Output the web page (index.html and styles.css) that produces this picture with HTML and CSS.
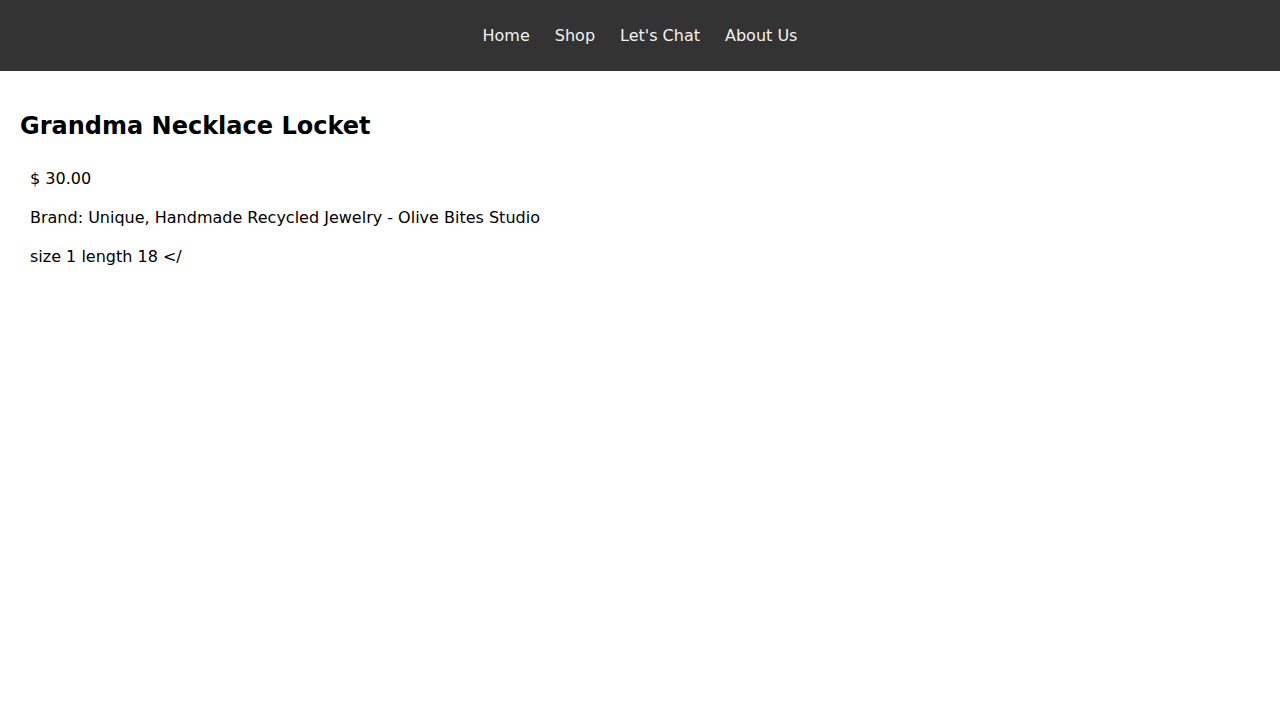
FILE: index.html
```html
<!DOCTYPE html>
<html lang="en">
<head>
<meta charset="utf-8">
<title>Grandma Necklace Locket</title>
<link rel="stylesheet" href="styles.css">
</head>
<body>
<nav class="topnav">
  <a class="nav-link" href="#">Home</a>
  <a class="nav-link" href="#">Shop</a>
  <a class="nav-link" href="#">Let's Chat</a>
  <a class="nav-link" href="#">About Us</a>
</nav>
<main class="product">
  <h1 class="product-title">Grandma Necklace Locket</h1>
  <div class="details">
    <p class="detail">$ 30.00</p>
    <p class="detail">Brand: Unique, Handmade Recycled Jewelry - Olive Bites Studio</p>
    <p class="detail">size 1 length 18 &lt;/</p>
  </div>
</main>
</body>
</html>
```
FILE: styles.css
```css
html, body {
  margin: 0;
  padding: 0;
  background: #ffffff;
  font-family: "DejaVu Sans", sans-serif;
  color: #000;
}
.topnav {
  background: #333333;
  height: 71px;
  display: flex;
  justify-content: center;
  align-items: center;
  gap: 25px;
}
.nav-link {
  color: #f2f2f2;
  text-decoration: none;
  font-size: 16px;
  line-height: 19px;
}
.product {
  padding: 0 20px;
}
.product-title {
  font-size: 24px;
  font-weight: bold;
  line-height: 28px;
  margin: 41px 0 0;
}
.details {
  display: flex;
  flex-direction: column;
  gap: 20px;
  padding: 29px 10px 0;
}
.detail {
  margin: 0;
  font-size: 16px;
  line-height: 19px;
}
```
